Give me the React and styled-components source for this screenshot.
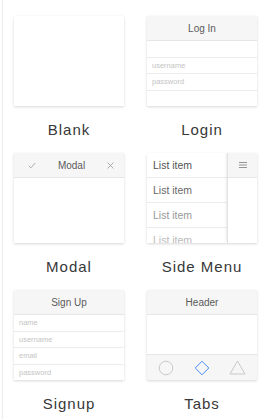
import React from "react";
import styled, { createGlobalStyle } from "styled-components";

const GlobalStyle = createGlobalStyle`
  html, body {
    margin: 0;
    padding: 0;
    background: #fff;
    font-family: "Liberation Sans", Arial, sans-serif;
  }
`;

function CheckIcon() {
  return (
    <svg width="8" height="7" viewBox="0 0 8 7">
      <path d="M0.8 3.8 L2.9 5.9 L7.2 1" fill="none" stroke="#9a9a9a" strokeWidth="0.8" />
    </svg>
  );
}

function CloseIcon() {
  return (
    <svg width="7" height="7" viewBox="0 0 7 7">
      <path d="M0.5 0.5 L6.5 6.5 M6.5 0.5 L0.5 6.5" fill="none" stroke="#9a9a9a" strokeWidth="0.8" />
    </svg>
  );
}

function MenuIcon() {
  return (
    <svg width="8" height="6" viewBox="0 0 8 6">
      <path d="M0 0.5 H8 M0 3 H8 M0 5.5 H8" stroke="#8a8a8a" strokeWidth="0.9" />
    </svg>
  );
}

function TabIcons() {
  return (
    <>
      <svg width="16" height="16" viewBox="0 0 16 16">
        <circle cx="8" cy="8" r="6.8" fill="none" stroke="#c9c9c9" strokeWidth="1" />
      </svg>
      <svg width="16" height="16" viewBox="0 0 16 16">
        <path d="M8 1.2 L14.8 8 L8 14.8 L1.2 8 Z" fill="none" stroke="#4a8af4" strokeWidth="1" strokeLinejoin="round" />
      </svg>
      <svg width="17" height="15" viewBox="0 0 17 15">
        <path d="M8.5 1 L16 14 L1 14 Z" fill="none" stroke="#c9c9c9" strokeWidth="1" strokeLinejoin="round" />
      </svg>
    </>
  );
}

function App() {
  return (
    <Page>
      <GlobalStyle />
      <Grid>
        <Template>
          <Card />
          <Label>Blank</Label>
        </Template>

        <Template>
          <Card>
            <Header>Log In</Header>
            <Field />
            <Field>username</Field>
            <Field>password</Field>
            <Field $last />
          </Card>
          <Label>Login</Label>
        </Template>

        <Template>
          <Card>
            <Header $spread>
              <CheckIcon />
              <span>Modal</span>
              <CloseIcon />
            </Header>
          </Card>
          <Label>Modal</Label>
        </Template>

        <Template>
          <Card $row>
            <MenuList>
              <MenuItem $tone="#555">List item</MenuItem>
              <MenuItem $tone="#6a6a6a">List item</MenuItem>
              <MenuItem $tone="#999">List item</MenuItem>
              <MenuItem $tone="#bbb">List item</MenuItem>
            </MenuList>
            <MenuContent>
              <Header>
                <MenuIcon />
              </Header>
            </MenuContent>
          </Card>
          <Label>Side Menu</Label>
        </Template>

        <Template>
          <Card>
            <Header>Sign Up</Header>
            <Field>name</Field>
            <Field>username</Field>
            <Field>email</Field>
            <Field $last>password</Field>
          </Card>
          <Label>Signup</Label>
        </Template>

        <Template>
          <Card>
            <Header>Header</Header>
            <TabBody />
            <TabBar>
              <TabIcons />
            </TabBar>
          </Card>
          <Label>Tabs</Label>
        </Template>
      </Grid>
    </Page>
  );
}

const Page = styled.div`
  margin-left: 2px;
  min-height: 419px;
  border-left: 1px solid #ededed;
  box-sizing: border-box;
`;

const Grid = styled.div`
  display: grid;
  grid-template-columns: 110px 110px;
  column-gap: 23px;
  row-gap: 14.5px;
  padding: 16px 0 0 11px;
`;

const Template = styled.div`
  display: flex;
  flex-direction: column;
  align-items: center;
`;

const Card = styled.div`
  width: 110px;
  height: 90px;
  background: #fff;
  box-shadow: 0 1px 2.5px rgba(0, 0, 0, 0.16);
  display: flex;
  flex-direction: ${(p) => (p.$row ? "row" : "column")};
  overflow: hidden;
`;

const Label = styled.div`
  margin-top: 14.5px;
  font-size: 15px;
  line-height: 18px;
  letter-spacing: 1px;
  color: #383838;
`;

const Header = styled.div`
  height: 24px;
  flex: none;
  background: #f6f6f6;
  border-bottom: 1px solid #e6e6e6;
  display: flex;
  align-items: center;
  justify-content: ${(p) => (p.$spread ? "space-between" : "center")};
  padding: ${(p) => (p.$spread ? "0 10px 0 14px" : "0")};
  font-size: 10px;
  color: #5a5a5a;
`;

const Field = styled.div`
  flex: 1;
  display: flex;
  align-items: center;
  padding-left: 5px;
  font-size: 7.5px;
  color: #c4c4c4;
  border-bottom: ${(p) => (p.$last ? "none" : "1px solid #ececec")};
`;

const MenuList = styled.div`
  width: 80px;
  flex: none;
  display: flex;
  flex-direction: column;
`;

const MenuItem = styled.div`
  height: 24px;
  flex: none;
  display: flex;
  align-items: center;
  padding-left: 6px;
  border-bottom: 1px solid #ececec;
  font-size: 10.5px;
  color: ${(p) => p.$tone};
`;

const MenuContent = styled.div`
  flex: 1;
  display: flex;
  flex-direction: column;
  border-left: 1px solid #e2e2e2;
  box-shadow: -1px 0 2px rgba(0, 0, 0, 0.08);
  background: #fff;
`;

const TabBody = styled.div`
  flex: 1;
  border-bottom: 1px solid #e6e6e6;
`;

const TabBar = styled.div`
  height: 25px;
  flex: none;
  background: #f6f6f6;
  display: flex;
  align-items: center;
  justify-content: space-between;
  padding: 0 11px;
`;

export default App;
